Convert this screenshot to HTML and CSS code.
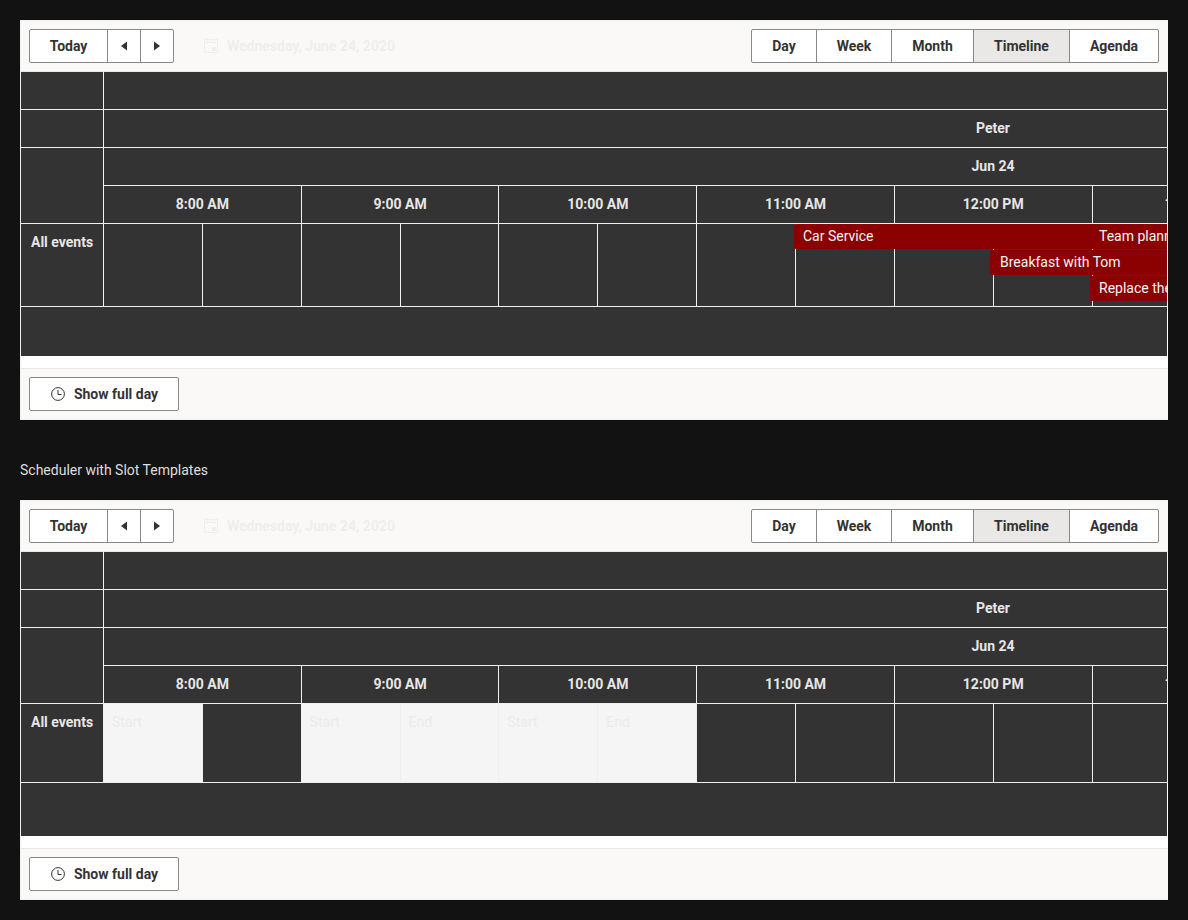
FILE: index.html
```html
<!DOCTYPE html>
<html lang="en">
<head>
  <meta charset="UTF-8" />
  <meta name="viewport" content="width=device-width, initial-scale=1.0" />
  <title>Scheduler</title>
  <link rel="stylesheet" href="styles.css">
</head>
<body>

  <!-- Scheduler with events -->
  <div class="scheduler">
    <div class="toolbar">
      <div class="btn-group">
        <button class="btn btn-today">Today</button>
        <button class="btn btn-arrow"><svg width="8" height="10" viewBox="0 0 8 10"><path d="M7 .5v9L1 5z" /></svg></button>
        <button class="btn btn-arrow"><svg width="8" height="10" viewBox="0 0 8 10"><path d="M1 .5v9L7 5z" /></svg></button>
      </div>
      <div class="date-nav">
        <svg class="cal-icon" width="14" height="15" viewBox="0 0 14 15"><path d="M.5 1.500h13v13H.5zM.5 4.500h13M3.500 0v3M10.500 0v3" fill="none" stroke="currentColor" /><rect x="8" y="9" width="4" height="4" fill="currentColor" /></svg>
        <span>Wednesday, June 24, 2020</span>
      </div>
      <div class="btn-group views">
        <button class="btn btn-day">Day</button>
        <button class="btn btn-week">Week</button>
        <button class="btn btn-month">Month</button>
        <button class="btn btn-timeline selected">Timeline</button>
        <button class="btn btn-agenda">Agenda</button>
      </div>
    </div>

    <div class="view">
      <div class="side">
        <div class="side-cell"></div>
        <div class="side-cell"></div>
        <div class="side-cell tall"></div>
        <div class="side-cell label">All events</div>
      </div>
      <div class="main">
        <div class="track">
          <div class="head-row"></div>
          <div class="head-row">Peter</div>
          <div class="head-row">Jun 24</div>
          <div class="head-row hours">
            <div class="hour">8:00 AM</div>
            <div class="hour">9:00 AM</div>
            <div class="hour">10:00 AM</div>
            <div class="hour">11:00 AM</div>
            <div class="hour">12:00 PM</div>
            <div class="hour">1:00 PM</div>
            <div class="hour">2:00 PM</div>
            <div class="hour">3:00 PM</div>
            <div class="hour">4:00 PM</div>
          </div>
          <div class="slots">
            <div class="slot"></div><div class="slot"></div>
            <div class="slot"></div><div class="slot"></div>
            <div class="slot"></div><div class="slot"></div>
            <div class="slot"></div><div class="slot"></div>
            <div class="slot"></div><div class="slot"></div>
            <div class="slot"></div><div class="slot"></div>
            <div class="slot"></div><div class="slot"></div>
            <div class="slot"></div><div class="slot"></div>
            <div class="slot"></div><div class="slot"></div>
            <div class="event ev-car">Car Service</div>
            <div class="event ev-team">Team planning meeting</div>
            <div class="event ev-breakfast">Breakfast with Tom</div>
            <div class="event ev-replace">Replace the printer</div>
          </div>
        </div>
      </div>
    </div>
    <div class="filler"></div>
    <div class="white-gap"></div>

    <div class="footer">
      <button class="btn btn-full"><svg width="14" height="14" viewBox="0 0 14 14"><circle cx="7" cy="7" r="6.400" fill="none" stroke="currentColor" /><path d="M7 3v4.500h3.500" fill="none" stroke="currentColor" /></svg>Show full day</button>
    </div>
  </div>

  <p class="caption">Scheduler with Slot Templates</p>

  <!-- Scheduler with slot templates -->
  <div class="scheduler second">
    <div class="toolbar">
      <div class="btn-group">
        <button class="btn btn-today">Today</button>
        <button class="btn btn-arrow"><svg width="8" height="10" viewBox="0 0 8 10"><path d="M7 .5v9L1 5z" /></svg></button>
        <button class="btn btn-arrow"><svg width="8" height="10" viewBox="0 0 8 10"><path d="M1 .5v9L7 5z" /></svg></button>
      </div>
      <div class="date-nav">
        <svg class="cal-icon" width="14" height="15" viewBox="0 0 14 15"><path d="M.5 1.500h13v13H.5zM.5 4.500h13M3.500 0v3M10.500 0v3" fill="none" stroke="currentColor" /><rect x="8" y="9" width="4" height="4" fill="currentColor" /></svg>
        <span>Wednesday, June 24, 2020</span>
      </div>
      <div class="btn-group views">
        <button class="btn btn-day">Day</button>
        <button class="btn btn-week">Week</button>
        <button class="btn btn-month">Month</button>
        <button class="btn btn-timeline selected">Timeline</button>
        <button class="btn btn-agenda">Agenda</button>
      </div>
    </div>

    <div class="view">
      <div class="side">
        <div class="side-cell"></div>
        <div class="side-cell"></div>
        <div class="side-cell tall"></div>
        <div class="side-cell label">All events</div>
      </div>
      <div class="main">
        <div class="track">
          <div class="head-row"></div>
          <div class="head-row">Peter</div>
          <div class="head-row">Jun 24</div>
          <div class="head-row hours">
            <div class="hour">8:00 AM</div>
            <div class="hour">9:00 AM</div>
            <div class="hour">10:00 AM</div>
            <div class="hour">11:00 AM</div>
            <div class="hour">12:00 PM</div>
            <div class="hour">1:00 PM</div>
            <div class="hour">2:00 PM</div>
            <div class="hour">3:00 PM</div>
            <div class="hour">4:00 PM</div>
          </div>
          <div class="slots">
            <div class="slot light">Start</div><div class="slot"></div>
            <div class="slot light">Start</div><div class="slot light">End</div>
            <div class="slot light">Start</div><div class="slot light">End</div>
            <div class="slot"></div><div class="slot"></div>
            <div class="slot"></div><div class="slot"></div>
            <div class="slot"></div><div class="slot"></div>
            <div class="slot"></div><div class="slot"></div>
            <div class="slot"></div><div class="slot"></div>
            <div class="slot"></div><div class="slot"></div>
          </div>
        </div>
      </div>
    </div>
    <div class="filler"></div>
    <div class="white-gap"></div>

    <div class="footer">
      <button class="btn btn-full"><svg width="14" height="14" viewBox="0 0 14 14"><circle cx="7" cy="7" r="6.400" fill="none" stroke="currentColor" /><path d="M7 3v4.500h3.500" fill="none" stroke="currentColor" /></svg>Show full day</button>
    </div>
  </div>

</body>
</html>
```

FILE: styles.css
```css
body { margin: 0; padding: 20px; background: #121212; font-family: Roboto, "Liberation Sans", sans-serif; font-size: 14px; line-height: 20px; color: #e6e6e6; }

.scheduler { width: 1148px; height: 400px; box-sizing: border-box; border: 1px solid #f0f0f0; border-right-width: 0; background: #fff; display: flex; flex-direction: column; }

.toolbar { flex: none; height: 51px; box-sizing: border-box; padding: 8px; padding-right: 9px; background: #faf9f7; border-bottom: 1px solid #e8e8e8; display: flex; align-items: center; }
.btn-group { display: flex; }
.views { margin-left: auto; }
.btn { height: 34px; box-sizing: border-box; margin: 0; padding: 0; border: 1px solid #888; background: #fff; color: #333; font: 700 14px/20px Roboto, "Liberation Sans", sans-serif; display: flex; align-items: center; justify-content: center; }
.btn-group .btn + .btn { margin-left: -1px; }
.btn-group .btn:first-child { border-radius: 2px 0 0 2px; }
.btn-group .btn:last-child { border-radius: 0 2px 2px 0; }
.btn-today { width: 79px; }
.btn-arrow { width: 34px; }
.btn-arrow svg { fill: #333; }
.btn-day { width: 66px; }
.btn-week { width: 76px; }
.btn-month { width: 83px; }
.btn-timeline { width: 97px; }
.btn-agenda { width: 90px; }
.btn.selected { background: #e9e8e6; }

.date-nav { margin-left: 30px; display: flex; align-items: center; color: #eeeeec; font-weight: 700; }
.cal-icon { margin-right: 9px; margin-top: -1px; }

.view { flex: none; display: flex; background: #333; }
.side { flex: none; width: 83px; box-sizing: border-box; border-right: 1px solid #f0f0f0; display: flex; flex-direction: column; }
.side-cell { height: 38px; box-sizing: border-box; border-bottom: 1px solid #f0f0f0; }
.side-cell.tall { height: 76px; }
.side-cell.label { height: auto; flex: 1; padding: 8px 10px; font-weight: 700; text-align: center; white-space: nowrap; }

.main { flex: 1; min-width: 0; overflow: hidden; border-right: 1px solid #f0f0f0; }
.track { width: 1778px; }
.head-row { height: 38px; box-sizing: border-box; border-bottom: 1px solid #f0f0f0; font-weight: 700; line-height: 37px; text-align: center; }
.hours { display: flex; }
.hour { flex: 0 0 197.72px; box-sizing: border-box; border-right: 1px solid #f0f0f0; }

.slots { position: relative; height: 83px; box-sizing: border-box; border-bottom: 1px solid #f0f0f0; display: flex; }
.second .slots { height: 79px; }
.slot { flex: 0 0 98.86px; box-sizing: border-box; padding: 8px; border-right: 1px solid #f0f0f0; }
.slot.light { background: #f5f5f5; border-right-color: #eeeeee; color: #ebebeb; }

.event { position: absolute; height: 25px; box-sizing: border-box; padding: 2px 9px; background: #8b0000; border-radius: 2px; color: #f5f5f5; white-space: nowrap; }
.ev-car { left: 690px; top: 0; width: 300px; }
.ev-team { left: 986px; top: 0; width: 300px; }
.ev-breakfast { left: 886px; top: 26px; width: 300px; padding-left: 10px; }
.ev-replace { left: 986px; top: 52px; width: 300px; }

.filler { flex: none; height: 49px; margin-right: 1px; background: #333; }
.second .filler { height: 53px; }
.white-gap { flex: 1; }

.footer { flex: none; height: 51px; box-sizing: border-box; padding: 8px; background: #faf9f7; border-top: 1px solid #e8e8e8; }
.btn-full { width: 150px; border-radius: 2px; padding-left: 1px; }
.btn-full svg { margin-right: 9px; }

.caption { margin: 40px 0 20px; height: 20px; color: #dedede; }
```
